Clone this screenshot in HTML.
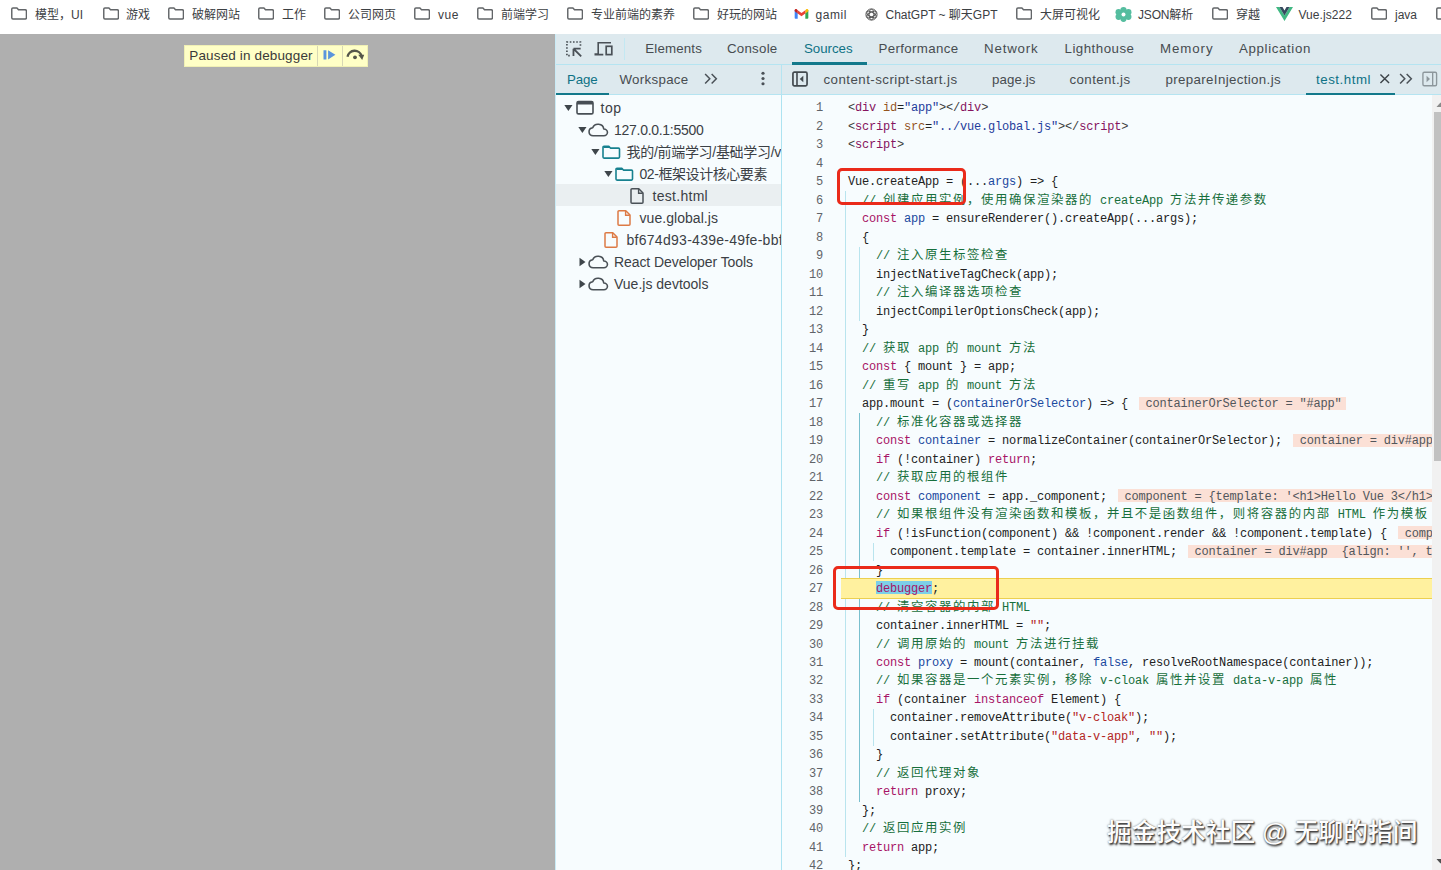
<!DOCTYPE html>
<html lang="zh-CN">
<head>
<meta charset="utf-8">
<title>DevTools - Paused in debugger</title>
<style>
*{box-sizing:border-box;margin:0;padding:0}
html,body{width:1441px;height:870px;overflow:hidden;background:#fff}
body{position:relative;font-family:"Liberation Sans","Noto Sans CJK SC",sans-serif;color:#303942}
.abs{position:absolute}
/* bookmarks bar */
#bm{position:absolute;left:0;top:0;width:1441px;height:34px;background:#fff}
.bk{position:absolute;top:0;height:30.4px;line-height:30.4px;font-size:12px;color:#3c4043;white-space:nowrap}
.bk svg{position:absolute;top:7.2px}
/* page area */
#page{position:absolute;left:0;top:34px;width:555px;height:836px;background:#afafaf}
#paused{position:absolute;left:184px;top:11.2px;height:21.5px;background:#ffffc6;border:1px solid #f0f0b4;display:flex;align-items:center;font-size:13.5px;color:#3a3a3a}
/* devtools */
#dt{position:absolute;left:555px;top:34px;width:886px;height:836px;background:#f7fcfe}
#dtl{position:absolute;left:0;top:0;width:1px;height:836px;background:#c9ebf6}
#tb1{position:absolute;left:0;top:0;width:886px;height:31px;background:#dde9ee;border-bottom:1px solid #b5e4f1}
#tb2{position:absolute;left:0;top:31px;width:886px;height:30px;background:#dde9ee;border-bottom:1px solid #b5e4f1}
#tb2 .tab{top:-0.4px}
.tab{position:absolute;top:0;height:30px;line-height:30px;font-size:14px;color:#474c50;white-space:nowrap}
.tab.on{color:#0e7285}
.ul{position:absolute;height:3px;background:#13798b}
/* nav */
#nav{position:absolute;left:0;top:61px;width:227px;height:775px;background:#f7fcfe;border-right:1px solid #ade3f1;overflow:hidden}
.row{position:absolute;left:0;width:226px;height:22px;line-height:22px;font-size:14px;color:#3b4045;white-space:nowrap}
.row.sel::before{content:"";position:absolute;left:0;top:-0.8px;width:100%;height:22px;background:#eaeff1}
.row svg{position:absolute;top:0}
.row span{position:absolute;top:0}
/* editor */
#ed{position:absolute;left:227px;top:61px;width:659px;height:775px;background:#f7fcfe;overflow:hidden}
.ln{position:absolute;left:0;width:650px;height:18.5px;line-height:18.5px;white-space:pre;font-family:"Liberation Mono","Noto Serif CJK SC",monospace;font-size:12px;letter-spacing:-0.2px;color:#222}
.no{position:absolute;left:0;width:41px;text-align:right;color:#5f6368}
.tx{position:absolute;left:66px}
.z{font-weight:400;font-family:"Noto Sans CJK SC","Noto Serif CJK SC",sans-serif;font-size:12.4px;letter-spacing:1.6px;position:relative;top:0px;line-height:0}
.k{color:#a71466}.d{color:#1b499f}.c{color:#176f3c}.s{color:#b3261e}.t{color:#86145f}.a{color:#94551e}.v{color:#1f3c9c}.p{color:#3c3c3c}
.x{color:#a71466;padding-top:1px;background:linear-gradient(#7ccfe8,#7ccfe8) no-repeat 0 0.300px/100% 13px}
.h{margin-left:10.5px;padding:1px 4px 0 7px;background:linear-gradient(#fbe0d6,#fbe0d6) no-repeat 0 0.6px/100% 13.4px;color:#51565b}
.exec{background:#fff19f;border-top:1px solid #ecd050;border-bottom:1px solid #ecd050}
.guide{position:absolute;width:1px;background:#b9e4ee}
.guide.act{background:#79bfce}
.rbox{position:absolute;border:3px solid #ea2a1a;border-radius:5px}
#sb{position:absolute;left:877px;top:61px;width:9px;height:775px;background:#f1f1f1;overflow:hidden}
#th{position:absolute;left:1.500px;top:17px;width:8px;height:349px;background:#c1c1c1}
#wm{position:absolute;left:1107px;top:815.8px;font-weight:500;font-size:24.7px;line-height:34px;color:#fdfdfd;white-space:nowrap;font-family:"Liberation Sans","Noto Sans CJK SC",sans-serif;text-shadow:1px 1px 1px #444,0 0 2px #777,1px 2px 2px #666}
</style>
</head>
<body>
<div id="bm"><div class="bk" style="left:0"><svg style="left:10.5px" width="16.400" height="13" viewBox="0 0 17 13" preserveAspectRatio="none"><path d="M2 .9h4.2l1.6 1.9h7a1.2 1.2 0 0 1 1.2 1.2v6.8a1.2 1.2 0 0 1-1.2 1.2H2a1.2 1.2 0 0 1-1.2-1.2V2.1A1.2 1.2 0 0 1 2 .9z" fill="none" stroke="#626568" stroke-width="1.5" stroke-linejoin="round"/></svg><span style="position:absolute;left:35px;letter-spacing:-0.003px">模型，UI</span></div>
<div class="bk" style="left:0"><svg style="left:102.5px" width="16.400" height="13" viewBox="0 0 17 13" preserveAspectRatio="none"><path d="M2 .9h4.2l1.6 1.9h7a1.2 1.2 0 0 1 1.2 1.2v6.8a1.2 1.2 0 0 1-1.2 1.2H2a1.2 1.2 0 0 1-1.2-1.2V2.1A1.2 1.2 0 0 1 2 .9z" fill="none" stroke="#626568" stroke-width="1.5" stroke-linejoin="round"/></svg><span style="position:absolute;left:126px;letter-spacing:0px">游戏</span></div>
<div class="bk" style="left:0"><svg style="left:167.5px" width="16.400" height="13" viewBox="0 0 17 13" preserveAspectRatio="none"><path d="M2 .9h4.2l1.6 1.9h7a1.2 1.2 0 0 1 1.2 1.2v6.8a1.2 1.2 0 0 1-1.2 1.2H2a1.2 1.2 0 0 1-1.2-1.2V2.1A1.2 1.2 0 0 1 2 .9z" fill="none" stroke="#626568" stroke-width="1.5" stroke-linejoin="round"/></svg><span style="position:absolute;left:192px;letter-spacing:0px">破解网站</span></div>
<div class="bk" style="left:0"><svg style="left:257.5px" width="16.400" height="13" viewBox="0 0 17 13" preserveAspectRatio="none"><path d="M2 .9h4.2l1.6 1.9h7a1.2 1.2 0 0 1 1.2 1.2v6.8a1.2 1.2 0 0 1-1.2 1.2H2a1.2 1.2 0 0 1-1.2-1.2V2.1A1.2 1.2 0 0 1 2 .9z" fill="none" stroke="#626568" stroke-width="1.5" stroke-linejoin="round"/></svg><span style="position:absolute;left:282px;letter-spacing:0px">工作</span></div>
<div class="bk" style="left:0"><svg style="left:323.5px" width="16.400" height="13" viewBox="0 0 17 13" preserveAspectRatio="none"><path d="M2 .9h4.2l1.6 1.9h7a1.2 1.2 0 0 1 1.2 1.2v6.8a1.2 1.2 0 0 1-1.2 1.2H2a1.2 1.2 0 0 1-1.2-1.2V2.1A1.2 1.2 0 0 1 2 .9z" fill="none" stroke="#626568" stroke-width="1.5" stroke-linejoin="round"/></svg><span style="position:absolute;left:348px;letter-spacing:0px">公司网页</span></div>
<div class="bk" style="left:0"><svg style="left:413.5px" width="16.400" height="13" viewBox="0 0 17 13" preserveAspectRatio="none"><path d="M2 .9h4.2l1.6 1.9h7a1.2 1.2 0 0 1 1.2 1.2v6.8a1.2 1.2 0 0 1-1.2 1.2H2a1.2 1.2 0 0 1-1.2-1.2V2.1A1.2 1.2 0 0 1 2 .9z" fill="none" stroke="#626568" stroke-width="1.5" stroke-linejoin="round"/></svg><span style="position:absolute;left:438px;letter-spacing:0.547px">vue</span></div>
<div class="bk" style="left:0"><svg style="left:476.5px" width="16.400" height="13" viewBox="0 0 17 13" preserveAspectRatio="none"><path d="M2 .9h4.2l1.6 1.9h7a1.2 1.2 0 0 1 1.2 1.2v6.8a1.2 1.2 0 0 1-1.2 1.2H2a1.2 1.2 0 0 1-1.2-1.2V2.1A1.2 1.2 0 0 1 2 .9z" fill="none" stroke="#626568" stroke-width="1.5" stroke-linejoin="round"/></svg><span style="position:absolute;left:501px;letter-spacing:0px">前端学习</span></div>
<div class="bk" style="left:0"><svg style="left:566.5px" width="16.400" height="13" viewBox="0 0 17 13" preserveAspectRatio="none"><path d="M2 .9h4.2l1.6 1.9h7a1.2 1.2 0 0 1 1.2 1.2v6.8a1.2 1.2 0 0 1-1.2 1.2H2a1.2 1.2 0 0 1-1.2-1.2V2.1A1.2 1.2 0 0 1 2 .9z" fill="none" stroke="#626568" stroke-width="1.5" stroke-linejoin="round"/></svg><span style="position:absolute;left:591px;letter-spacing:0px">专业前端的素养</span></div>
<div class="bk" style="left:0"><svg style="left:692.5px" width="16.400" height="13" viewBox="0 0 17 13" preserveAspectRatio="none"><path d="M2 .9h4.2l1.6 1.9h7a1.2 1.2 0 0 1 1.2 1.2v6.8a1.2 1.2 0 0 1-1.2 1.2H2a1.2 1.2 0 0 1-1.2-1.2V2.1A1.2 1.2 0 0 1 2 .9z" fill="none" stroke="#626568" stroke-width="1.5" stroke-linejoin="round"/></svg><span style="position:absolute;left:717px;letter-spacing:0px">好玩的网站</span></div>
<div class="bk" style="left:0"><svg style="left:793.5px;top:9px" width="15" height="10" viewBox="0 0 15 11"><path d="M0 1.2V10a.8.8 0 0 0 .8.8H3.3V4.6z" fill="#4285f4"/><path d="M11.7 4.6v6.2h2.5a.8.8 0 0 0 .8-.8V1.2z" fill="#34a853"/><path d="M11.7 1.3v3.6L15 2.4V1.3c0-1.3-1.5-1.8-2.3-1.1z" fill="#fbbc04"/><path d="M3.3 4.9V1.3L7.5 4.5l4.2-3.2v3.6L7.5 8.1z" fill="#ea4335"/><path d="M0 1.3v1.1l3.3 2.5V1.3L2.3.2C1.500-.5 0 0 0 1.300z" fill="#c5221f"/></svg><span style="position:absolute;left:815.5px;letter-spacing:0.562px">gamil</span></div>
<div class="bk" style="left:0"><svg style="left:864.5px;top:8px" width="13" height="13" viewBox="0 0 13 13"><g fill="none" stroke="#5a5a5a" stroke-width="1"><circle cx="6.5" cy="6.5" r="5.6"/><ellipse cx="6.5" cy="6.5" rx="5.2" ry="2.3" transform="rotate(30 6.5 6.5)"/><ellipse cx="6.5" cy="6.5" rx="5.2" ry="2.3" transform="rotate(-30 6.5 6.5)"/><ellipse cx="6.5" cy="6.5" rx="2.3" ry="5.2"/></g></svg><span style="position:absolute;left:885.5px;letter-spacing:-0.01px">ChatGPT ~ 聊天GPT</span></div>
<div class="bk" style="left:0"><svg style="left:1015.5px" width="16.400" height="13" viewBox="0 0 17 13" preserveAspectRatio="none"><path d="M2 .9h4.2l1.6 1.9h7a1.2 1.2 0 0 1 1.2 1.2v6.8a1.2 1.2 0 0 1-1.2 1.2H2a1.2 1.2 0 0 1-1.2-1.2V2.1A1.2 1.2 0 0 1 2 .9z" fill="none" stroke="#626568" stroke-width="1.5" stroke-linejoin="round"/></svg><span style="position:absolute;left:1040px;letter-spacing:0px">大屏可视化</span></div>
<div class="bk" style="left:0"><svg style="left:1115px;top:7px" width="17" height="15" viewBox="0 0 17 15"><g fill="#55bd9f"><circle cx="8.5" cy="3.2" r="3.1"/><circle cx="8.5" cy="11.8" r="3.1"/><circle cx="3.6" cy="5.2" r="3.1"/><circle cx="13.4" cy="5.2" r="3.1"/><circle cx="3.600" cy="9.8" r="3.1"/><circle cx="13.4" cy="9.8" r="3.100"/><circle cx="8.5" cy="7.5" r="4"/></g><circle cx="8.5" cy="7.500" r="2" fill="#fff"/></svg><span style="position:absolute;left:1138px;letter-spacing:-0.169px">JSON解析</span></div>
<div class="bk" style="left:0"><svg style="left:1211.5px" width="16.400" height="13" viewBox="0 0 17 13" preserveAspectRatio="none"><path d="M2 .9h4.2l1.6 1.9h7a1.2 1.2 0 0 1 1.2 1.2v6.8a1.2 1.2 0 0 1-1.2 1.2H2a1.2 1.2 0 0 1-1.2-1.2V2.1A1.2 1.2 0 0 1 2 .9z" fill="none" stroke="#626568" stroke-width="1.5" stroke-linejoin="round"/></svg><span style="position:absolute;left:1236px;letter-spacing:0px">穿越</span></div>
<div class="bk" style="left:0"><svg style="left:1275.5px;top:7px" width="17" height="14" viewBox="0 0 17 14"><path d="M0 0h3.4L8.5 8.600 13.600 0H17L8.5 14z" fill="#41b883"/><path d="M3.400 0h3.100l2 3.400 2-3.400h3.100L8.500 8.600z" fill="#35495e"/></svg><span style="position:absolute;left:1298.5px;letter-spacing:0.062px">Vue.js222</span></div>
<div class="bk" style="left:0"><svg style="left:1370.5px" width="16.400" height="13" viewBox="0 0 17 13" preserveAspectRatio="none"><path d="M2 .9h4.2l1.6 1.9h7a1.2 1.2 0 0 1 1.2 1.2v6.8a1.2 1.2 0 0 1-1.2 1.2H2a1.2 1.2 0 0 1-1.2-1.2V2.1A1.2 1.2 0 0 1 2 .9z" fill="none" stroke="#626568" stroke-width="1.5" stroke-linejoin="round"/></svg><span style="position:absolute;left:1395px;letter-spacing:-0.004px">java</span></div>
<div class="bk" style="left:0"><svg style="left:1435.5px" width="16.400" height="13" viewBox="0 0 17 13" preserveAspectRatio="none"><path d="M2 .9h4.2l1.6 1.9h7a1.2 1.2 0 0 1 1.2 1.2v6.8a1.2 1.2 0 0 1-1.2 1.2H2a1.2 1.2 0 0 1-1.2-1.2V2.1A1.2 1.2 0 0 1 2 .9z" fill="none" stroke="#626568" stroke-width="1.5" stroke-linejoin="round"/></svg><span style="position:absolute;left:1460px;letter-spacing:0px"></span></div></div>
<div id="page">
  <div id="paused"><span style="padding:0 3.500px 0 4.300px;letter-spacing:0.14px">Paused in debugger</span><div style="width:1px;height:19.5px;background:#d8d8b4;margin-left:1px"></div><svg width="23.500" height="21" viewBox="0.500 0.500 23.500 21" style="display:block"><path d="M6 5.700h2.900v9.200H6zM10.600 5.700l7.300 4.600-7.300 4.600z" fill="#5b95dc"/></svg><div style="width:1px;height:19.5px;background:#d8d8b4"></div><svg width="24.500" height="21" viewBox="0 0.500 24.500 21" style="display:block"><path d="M4.500 12.300a7.300 7.300 0 0 1 14.200-.8" fill="none" stroke="#55564a" stroke-width="2.300"/><path d="M15.200 10.200h6l-2 5.200z" fill="#55564a"/><circle cx="12" cy="12.800" r="1.900" fill="#55564a"/></svg></div>
</div>
<div id="dt">
  <div id="tb1"><svg class="abs" style="left:10px;top:6px" width="18" height="18" viewBox="0 0 17 17"><path d="M14.6 5.500V1.900H1.800V14.800H5.300" fill="none" stroke="#4a5157" stroke-width="1.6" stroke-dasharray="1.5 1.55"/><path d="M8 8.200h6.800M8 8.200v6.800M8.300 8.500l7 7" fill="none" stroke="#4a5157" stroke-width="1.700"/></svg><svg class="abs" style="left:39px;top:7px" width="20" height="15" viewBox="0 0 20 15"><path d="M17 1.800H4.200V13H0.5M0.500 13.600H9.300" fill="none" stroke="#4a5157" stroke-width="1.600"/><rect x="12.200" y="5.300" width="5.600" height="8.300" fill="none" stroke="#4a5157" stroke-width="1.700"/></svg><div class="abs" style="left:69px;top:4px;width:1px;height:22px;background:#c3e8f2"></div><div class="tab" style="left:90.3px;font-size:13.3px;letter-spacing:0.158px">Elements</div>
<div class="tab" style="left:172px;font-size:13.3px;letter-spacing:0.243px">Console</div>
<div class="tab on" style="left:249px;font-size:13.3px;letter-spacing:-0.04px">Sources</div>
<div class="tab" style="left:323.5px;font-size:13.3px;letter-spacing:0.352px">Performance</div>
<div class="tab" style="left:429px;font-size:13.3px;letter-spacing:0.817px">Network</div>
<div class="tab" style="left:509.5px;font-size:13.3px;letter-spacing:0.492px">Lighthouse</div>
<div class="tab" style="left:605px;font-size:13.3px;letter-spacing:0.911px">Memory</div>
<div class="tab" style="left:684px;font-size:13.3px;letter-spacing:0.631px">Application</div><div class="ul" style="left:236.500px;top:28px;width:75px"></div></div>
  <div id="tb2"><div class="tab on" style="left:12px;font-size:13.3px;letter-spacing:-0.141px">Page</div>
<div class="tab" style="left:64.5px;font-size:13.3px;letter-spacing:0.304px">Workspace</div>
<div class="tab" style="left:268.5px;font-size:13.3px;letter-spacing:0.461px">content-script-start.js</div>
<div class="tab" style="left:437px;font-size:13.3px;letter-spacing:0.087px">page.js</div>
<div class="tab" style="left:514.5px;font-size:13.3px;letter-spacing:0.408px">content.js</div>
<div class="tab" style="left:610.5px;font-size:13.3px;letter-spacing:0.36px">prepareInjection.js</div>
<div class="tab on" style="left:761px;font-size:13.3px;letter-spacing:0.528px">test.html</div><svg class="abs" style="left:149px;top:8px" width="14" height="11.500" viewBox="0 0 15 12" preserveAspectRatio="none"><path d="M1.200 1l5 5-5 5M8.200 1l5 5-5 5" fill="none" stroke="#4a5157" stroke-width="1.600"/></svg><svg class="abs" style="left:205px;top:6px" width="6" height="15" viewBox="0 0 6 16" preserveAspectRatio="none"><g fill="#4a5157"><circle cx="3" cy="2.500" r="1.600"/><circle cx="3" cy="8" r="1.600"/><circle cx="3" cy="13.5" r="1.6"/></g></svg><svg class="abs" style="left:237px;top:5.600px" width="16" height="16" viewBox="0 0 17 16" preserveAspectRatio="none"><rect x="1" y="1.200" width="15" height="13.6" rx="1.500" fill="none" stroke="#42494e" stroke-width="1.800"/><path d="M5.300 1.200v13.600" stroke="#42494e" stroke-width="1.700"/><path d="M12 4.800v6.400L8.200 8z" fill="#42494e"/></svg><svg class="abs" style="left:824.300px;top:8.200px" width="11.500" height="11.500" viewBox="0 0 12 12"><path d="M1.500 1.500l9 9M10.500 1.500l-9 9" stroke="#3d4449" stroke-width="1.500"/></svg><svg class="abs" style="left:843.5px;top:8px" width="14" height="11.500" viewBox="0 0 15 12" preserveAspectRatio="none"><path d="M1.200 1l5 5-5 5M8.200 1l5 5-5 5" fill="none" stroke="#4a5157" stroke-width="1.600"/></svg><svg class="abs" style="left:867px;top:5.700px" width="15.500" height="16" viewBox="0 0 17 16" preserveAspectRatio="none"><rect x="1" y="1.200" width="15" height="13.6" rx="1.500" fill="none" stroke="#8d979c" stroke-width="1.500"/><path d="M11.700 1.200v13.600" stroke="#8d979c" stroke-width="1.500"/><path d="M5 4.800v6.400L8.800 8z" fill="#8d979c"/></svg><div class="abs" style="left:226px;top:0;width:1px;height:30px;background:#b5e4f1"></div><div class="ul" style="left:1px;top:27.5px;width:52.5px"></div><div class="ul" style="left:751px;top:27.5px;width:89px"></div></div>
  <div id="nav"><div class="row" style="top:1.7px"><svg style="left:9.3px" width="9" height="22" viewBox="0 0 9 22"><path d="M0.300 8h8.200L4.400 14z" fill="#3f464b"/></svg><svg style="left:20.5px" width="19" height="22" viewBox="0 0 19 22"><rect x="1" y="4.600" width="16" height="12.300" rx="1.500" fill="none" stroke="#474e54" stroke-width="1.600"/><path d="M1 6.100h16" stroke="#474e54" stroke-width="2.800"/></svg><span style="left:45.5px;letter-spacing:0.51px">top</span></div>
<div class="row" style="top:23.7px"><svg style="left:22.9px" width="9" height="22" viewBox="0 0 9 22"><path d="M0.300 8h8.200L4.400 14z" fill="#3f464b"/></svg><svg style="left:32.5px" width="21" height="22" viewBox="0.200 0 19.600 22" preserveAspectRatio="none"><path d="M5 16.800a4 4 0 0 1-.4-7.950 5.300 5.300 0 0 1 10.300 1.150 3.400 3.400 0 0 1 .1 6.800z" fill="none" stroke="#4a5157" stroke-width="1.500" stroke-linejoin="round"/></svg><span style="left:59px;letter-spacing:-0.28px">127.0.0.1:5500</span></div>
<div class="row" style="top:45.7px"><svg style="left:35.9px" width="9" height="22" viewBox="0 0 9 22"><path d="M0.300 8h8.200L4.400 14z" fill="#3f464b"/></svg><svg style="left:46.5px" width="19" height="22" viewBox="0 0 19 22"><path d="M2 5.200h4.800l1.600 1.900h8.100a1 1 0 0 1 1 1v8a1 1 0 0 1-1 1H2a1 1 0 0 1-1-1V6.200a1 1 0 0 1 1-1z" fill="none" stroke="#17818f" stroke-width="1.600" stroke-linejoin="round"/><path d="M1.500 5.200h5.300l1.600 1.900H1.500z" fill="#17818f"/></svg><span style="left:71.5px;letter-spacing:-0.297px">我的/前端学习/基础学习/vue</span></div>
<div class="row" style="top:67.7px"><svg style="left:48.8px" width="9" height="22" viewBox="0 0 9 22"><path d="M0.300 8h8.200L4.400 14z" fill="#3f464b"/></svg><svg style="left:59.5px" width="19" height="22" viewBox="0 0 19 22"><path d="M2 5.200h4.800l1.600 1.900h8.100a1 1 0 0 1 1 1v8a1 1 0 0 1-1 1H2a1 1 0 0 1-1-1V6.200a1 1 0 0 1 1-1z" fill="none" stroke="#17818f" stroke-width="1.600" stroke-linejoin="round"/><path d="M1.500 5.200h5.300l1.600 1.900H1.500z" fill="#17818f"/></svg><span style="left:84.5px;letter-spacing:-0.43px">02-框架设计核心要素</span></div>
<div class="row sel" style="top:89.7px"><svg style="left:75px" width="15" height="22" viewBox="0 0 15 22"><path d="M2 3.800h6.800l4.200 4.200v9.200a1 1 0 0 1-1 1H2a1 1 0 0 1-1-1V4.800a1 1 0 0 1 1-1z" fill="none" stroke="#4a5157" stroke-width="1.500" stroke-linejoin="round"/><path d="M8.600 4v4.200h4.200" fill="none" stroke="#4a5157" stroke-width="1.400"/></svg><span style="left:97.5px;letter-spacing:0.288px">test.html</span></div>
<div class="row" style="top:111.7px"><svg style="left:61.5px" width="15" height="22" viewBox="0 0 15 22"><path d="M2 3.800h6.800l4.200 4.200v9.200a1 1 0 0 1-1 1H2a1 1 0 0 1-1-1V4.800a1 1 0 0 1 1-1z" fill="none" stroke="#dd7a45" stroke-width="1.500" stroke-linejoin="round"/><path d="M8.600 4v4.200h4.200" fill="none" stroke="#dd7a45" stroke-width="1.400"/></svg><span style="left:84.5px;letter-spacing:0.052px">vue.global.js</span></div>
<div class="row" style="top:133.7px"><svg style="left:48.5px" width="15" height="22" viewBox="0 0 15 22"><path d="M2 3.800h6.800l4.200 4.200v9.200a1 1 0 0 1-1 1H2a1 1 0 0 1-1-1V4.800a1 1 0 0 1 1-1z" fill="none" stroke="#dd7a45" stroke-width="1.500" stroke-linejoin="round"/><path d="M8.600 4v4.200h4.200" fill="none" stroke="#dd7a45" stroke-width="1.400"/></svg><span style="left:71.5px;letter-spacing:0.281px">bf674d93-439e-49fe-bbf3</span></div>
<div class="row" style="top:155.7px"><svg style="left:23px" width="9" height="22" viewBox="0 0 9 22"><path d="M1.500 6.800v8.400L7.500 11z" fill="#3f464b"/></svg><svg style="left:32.5px" width="21" height="22" viewBox="0.200 0 19.600 22" preserveAspectRatio="none"><path d="M5 16.800a4 4 0 0 1-.4-7.950 5.300 5.300 0 0 1 10.300 1.150 3.400 3.400 0 0 1 .1 6.800z" fill="none" stroke="#4a5157" stroke-width="1.500" stroke-linejoin="round"/></svg><span style="left:59px;letter-spacing:-0.077px">React Developer Tools</span></div>
<div class="row" style="top:177.7px"><svg style="left:23px" width="9" height="22" viewBox="0 0 9 22"><path d="M1.500 6.800v8.400L7.500 11z" fill="#3f464b"/></svg><svg style="left:32.5px" width="21" height="22" viewBox="0.200 0 19.600 22" preserveAspectRatio="none"><path d="M5 16.800a4 4 0 0 1-.4-7.950 5.300 5.300 0 0 1 10.300 1.150 3.400 3.400 0 0 1 .1 6.800z" fill="none" stroke="#4a5157" stroke-width="1.500" stroke-linejoin="round"/></svg><span style="left:59px;letter-spacing:0.004px">Vue.js devtools</span></div></div>
  <div id="ed">
<div class="guide" style="left:63px;top:96.25px;height:666px"></div>
<div class="guide" style="left:77px;top:151.75px;height:74px"></div>
<div class="guide act" style="left:77px;top:318.25px;height:388.5px"></div>
<div class="guide" style="left:91px;top:447.75px;height:18.5px"></div>
<div class="guide" style="left:91px;top:614.25px;height:37px"></div>
<div class="abs exec" style="left:59px;top:483px;width:591.5px;height:21px"></div>
<div class="ln" style="top:4.30px"><span class="no">1</span><span class="tx"><span class="p">&lt;</span><span class="t">div</span> <span class="a">id</span>=<span class="v">"app"</span><span class="p">&gt;&lt;/</span><span class="t">div</span><span class="p">&gt;</span></span></div>
<div class="ln" style="top:22.79px"><span class="no">2</span><span class="tx"><span class="p">&lt;</span><span class="t">script</span> <span class="a">src</span>=<span class="v">"../vue.global.js"</span><span class="p">&gt;&lt;/</span><span class="t">script</span><span class="p">&gt;</span></span></div>
<div class="ln" style="top:41.28px"><span class="no">3</span><span class="tx"><span class="p">&lt;</span><span class="t">script</span><span class="p">&gt;</span></span></div>
<div class="ln" style="top:59.77px"><span class="no">4</span><span class="tx"></span></div>
<div class="ln" style="top:78.26px"><span class="no">5</span><span class="tx">Vue.createApp = (...<span class="d">args</span>) =&gt; {</span></div>
<div class="ln" style="top:96.75px"><span class="no">6</span><span class="tx">  <span class="c">// <span class="z">创建应用实例，使用确保渲染器的</span> createApp <span class="z">方法并传递参数</span></span></span></div>
<div class="ln" style="top:115.24px"><span class="no">7</span><span class="tx">  <span class="k">const</span> <span class="d">app</span> = ensureRenderer().createApp(...args);</span></div>
<div class="ln" style="top:133.73px"><span class="no">8</span><span class="tx">  {</span></div>
<div class="ln" style="top:152.22px"><span class="no">9</span><span class="tx">    <span class="c">// <span class="z">注入原生标签检查</span></span></span></div>
<div class="ln" style="top:170.71px"><span class="no">10</span><span class="tx">    injectNativeTagCheck(app);</span></div>
<div class="ln" style="top:189.20px"><span class="no">11</span><span class="tx">    <span class="c">// <span class="z">注入编译器选项检查</span></span></span></div>
<div class="ln" style="top:207.69px"><span class="no">12</span><span class="tx">    injectCompilerOptionsCheck(app);</span></div>
<div class="ln" style="top:226.18px"><span class="no">13</span><span class="tx">  }</span></div>
<div class="ln" style="top:244.67px"><span class="no">14</span><span class="tx">  <span class="c">// <span class="z">获取</span> app <span class="z">的</span> mount <span class="z">方法</span></span></span></div>
<div class="ln" style="top:263.16px"><span class="no">15</span><span class="tx">  <span class="k">const</span> { mount } = app;</span></div>
<div class="ln" style="top:281.65px"><span class="no">16</span><span class="tx">  <span class="c">// <span class="z">重写</span> app <span class="z">的</span> mount <span class="z">方法</span></span></span></div>
<div class="ln" style="top:300.14px"><span class="no">17</span><span class="tx">  app.mount = (<span class="d">containerOrSelector</span>) =&gt; {<span class="h">containerOrSelector = "#app"</span></span></div>
<div class="ln" style="top:318.63px"><span class="no">18</span><span class="tx">    <span class="c">// <span class="z">标准化容器或选择器</span></span></span></div>
<div class="ln" style="top:337.12px"><span class="no">19</span><span class="tx">    <span class="k">const</span> <span class="d">container</span> = normalizeContainer(containerOrSelector);<span class="h">container = div#app {align: '', title: '', lang: ''}</span></span></div>
<div class="ln" style="top:355.61px"><span class="no">20</span><span class="tx">    <span class="k">if</span> (!container) <span class="k">return</span>;</span></div>
<div class="ln" style="top:374.10px"><span class="no">21</span><span class="tx">    <span class="c">// <span class="z">获取应用的根组件</span></span></span></div>
<div class="ln" style="top:392.59px"><span class="no">22</span><span class="tx">    <span class="k">const</span> <span class="d">component</span> = app._component;<span class="h">component = {template: '&lt;h1&gt;Hello Vue 3&lt;/h1&gt;', render: undefined}</span></span></div>
<div class="ln" style="top:411.08px"><span class="no">23</span><span class="tx">    <span class="c">// <span class="z">如果根组件没有渲染函数和模板，并且不是函数组件，则将容器的内部</span> HTML <span class="z">作为模板</span></span></span></div>
<div class="ln" style="top:429.57px"><span class="no">24</span><span class="tx">    <span class="k">if</span> (!isFunction(component) &amp;&amp; !component.render &amp;&amp; !component.template) {<span class="h">component = {template: '&lt;h1&gt;Hello Vue 3&lt;/h1&gt;'}</span></span></div>
<div class="ln" style="top:448.06px"><span class="no">25</span><span class="tx">      component.template = container.innerHTML;<span class="h">container = div#app  {align: '', title: '', lang: ''}</span></span></div>
<div class="ln" style="top:466.55px"><span class="no">26</span><span class="tx">    }</span></div>
<div class="ln" style="top:485.04px"><span class="no">27</span><span class="tx">    <span class="x">debugger</span>;</span></div>
<div class="ln" style="top:503.53px"><span class="no">28</span><span class="tx">    <span class="c">// <span class="z">清空容器的内部</span> HTML</span></span></div>
<div class="ln" style="top:522.02px"><span class="no">29</span><span class="tx">    container.innerHTML = <span class="s">""</span>;</span></div>
<div class="ln" style="top:540.51px"><span class="no">30</span><span class="tx">    <span class="c">// <span class="z">调用原始的</span> mount <span class="z">方法进行挂载</span></span></span></div>
<div class="ln" style="top:559.00px"><span class="no">31</span><span class="tx">    <span class="k">const</span> <span class="d">proxy</span> = mount(container, <span class="d">false</span>, resolveRootNamespace(container));</span></div>
<div class="ln" style="top:577.49px"><span class="no">32</span><span class="tx">    <span class="c">// <span class="z">如果容器是一个元素实例，移除</span> v-cloak <span class="z">属性并设置</span> data-v-app <span class="z">属性</span></span></span></div>
<div class="ln" style="top:595.98px"><span class="no">33</span><span class="tx">    <span class="k">if</span> (container <span class="k">instanceof</span> Element) {</span></div>
<div class="ln" style="top:614.47px"><span class="no">34</span><span class="tx">      container.removeAttribute(<span class="s">"v-cloak"</span>);</span></div>
<div class="ln" style="top:632.96px"><span class="no">35</span><span class="tx">      container.setAttribute(<span class="s">"data-v-app"</span>, <span class="s">""</span>);</span></div>
<div class="ln" style="top:651.45px"><span class="no">36</span><span class="tx">    }</span></div>
<div class="ln" style="top:669.94px"><span class="no">37</span><span class="tx">    <span class="c">// <span class="z">返回代理对象</span></span></span></div>
<div class="ln" style="top:688.43px"><span class="no">38</span><span class="tx">    <span class="k">return</span> proxy;</span></div>
<div class="ln" style="top:706.92px"><span class="no">39</span><span class="tx">  };</span></div>
<div class="ln" style="top:725.41px"><span class="no">40</span><span class="tx">  <span class="c">// <span class="z">返回应用实例</span></span></span></div>
<div class="ln" style="top:743.90px"><span class="no">41</span><span class="tx">  <span class="k">return</span> app;</span></div>
<div class="ln" style="top:762.39px"><span class="no">42</span><span class="tx">};</span></div>
  </div>
  <div id="dtl"></div>
  <div id="sb"><div id="th"></div><svg class="abs" style="left:3.500px;top:6.500px" width="9" height="5" viewBox="0 0 8 5"><path d="M0 5h8L4 .5z" fill="#8a8a8a"/></svg><svg class="abs" style="left:3.500px;top:763.500px" width="9" height="5" viewBox="0 0 8 5"><path d="M0 0h8L4 4.500z" fill="#505050"/></svg></div>
</div>
<div class="rbox" style="left:837px;top:168px;width:128.5px;height:36.5px"></div><div class="rbox" style="left:833.400px;top:566.300px;width:165.600px;height:43.700px"></div>
<div id="wm">掘金技术社区 @ 无聊的指间</div>
</body>
</html>
